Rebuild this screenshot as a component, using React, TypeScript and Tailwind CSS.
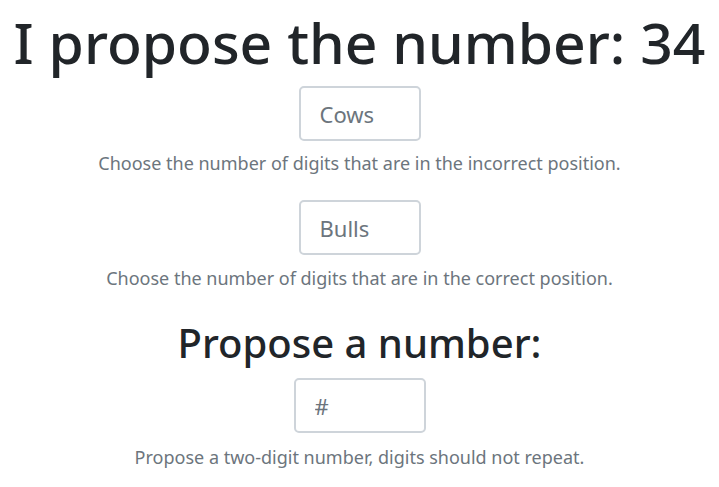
export default function App() {
  return (
    <div className="flex flex-col items-center bg-white min-h-[487px] font-['Noto_Sans',sans-serif] text-[#212529]">
      <h1 className="mt-[8px] text-[57px] font-medium leading-[1.2] whitespace-nowrap">I propose the number: 34</h1>

      <input
        type="text"
        placeholder="Cows"
        className="mt-[10px] w-[122px] h-[55px] rounded-[5px] border-2 border-[#ced4da] px-[19px] text-[22px] text-[#495057] placeholder:text-[#6c757d] outline-none"
      />
      <p className="mt-[9px] text-[18px] text-[#6c757d]">Choose the number of digits that are in the incorrect position.</p>

      <input
        type="text"
        placeholder="Bulls"
        className="mt-[23px] w-[122px] h-[55px] rounded-[5px] border-2 border-[#ced4da] px-[19px] text-[22px] text-[#495057] placeholder:text-[#6c757d] outline-none"
      />
      <p className="mt-[10px] text-[18px] text-[#6c757d]">Choose the number of digits that are in the correct position.</p>

      <h2 className="mt-[27px] text-[40px] font-medium leading-[1.2]">Propose a number:</h2>

      <input
        type="text"
        placeholder="#"
        className="mt-[11px] w-[132px] h-[55px] rounded-[5px] border-2 border-[#ced4da] px-[19px] text-[22px] text-[#495057] placeholder:text-[#6c757d] outline-none"
      />
      <p className="mt-[11px] text-[18px] text-[#6c757d]">Propose a two-digit number, digits should not repeat.</p>
    </div>
  );
}
